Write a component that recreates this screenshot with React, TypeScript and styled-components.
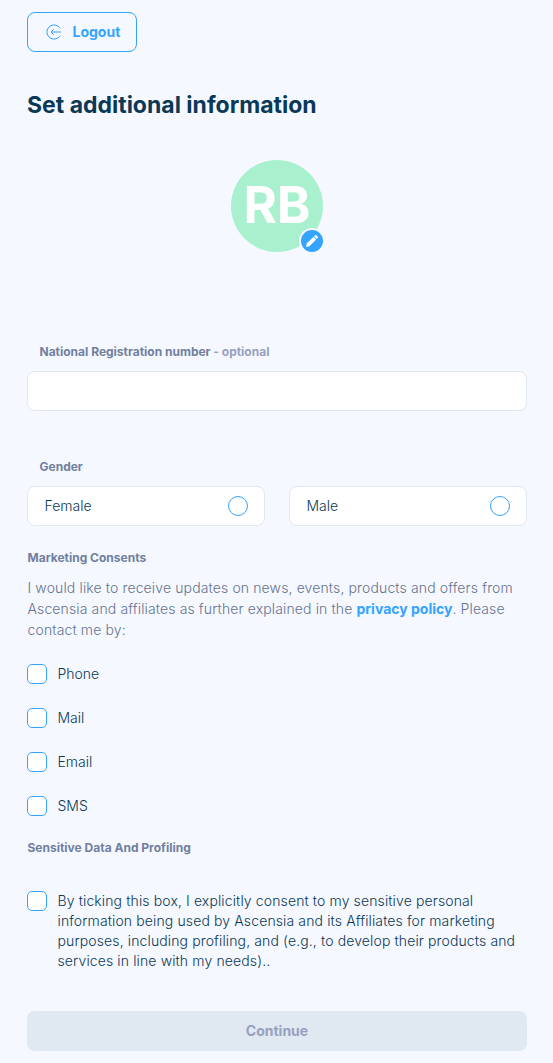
import React from 'react';
import styled, { createGlobalStyle } from 'styled-components';

const GlobalStyle = createGlobalStyle`
  *, *::before, *::after { box-sizing: border-box; }
  body {
    margin: 0;
    background: #f5f8ff;
    font-family: Inter, 'Liberation Sans', sans-serif;
    color: #0b3857;
  }
`;

const Page = styled.main`
  width: 553px;
  height: 1063px;
  padding: 12px 26px 0 27px;
  display: flex;
  flex-direction: column;
  align-items: stretch;
`;

const LogoutButton = styled.button`
  width: 110px;
  height: 40px;
  padding: 0 0 0 18px;
  display: flex;
  align-items: center;
  gap: 10.5px;
  border: 1px solid #34a4ff;
  border-radius: 8px;
  background: transparent;
  color: #34a4ff;
  font: 700 14px/20px Inter, sans-serif;
`;

const Title = styled.h1`
  margin: 37px 0 0;
  font-size: 23px;
  line-height: 32px;
  font-weight: 700;
`;

const Avatar = styled.div`
  position: relative;
  width: 92px;
  height: 92px;
  margin: 39px auto 0;
  padding-bottom: 3px;
  display: flex;
  align-items: center;
  justify-content: center;
  border-radius: 50%;
  background: #a9f0cf;
  color: #fff;
  font-size: 51px;
  line-height: 60px;
  font-weight: 700;
`;

const EditBadge = styled.button`
  position: absolute;
  right: -2px;
  bottom: -2px;
  width: 26px;
  height: 26px;
  padding: 0;
  display: flex;
  align-items: center;
  justify-content: center;
  border: 2px solid #f5f8ff;
  border-radius: 50%;
  background: #34a4ff;
`;

const Label = styled.div<{ $top: number; $indent?: boolean }>`
  margin-top: ${p => p.$top}px;
  padding-left: ${p => (p.$indent ? 12.5 : 0.5)}px;
  font-size: 12px;
  line-height: 20px;
  font-weight: 700;
  color: #707f9f;
`;

const Optional = styled.span`
  color: #989fc0;
`;

const TextInput = styled.input`
  width: 100%;
  height: 40px;
  margin-top: 9px;
  padding: 0 16px;
  border: 1px solid #e0e8f2;
  border-radius: 8px;
  background: #fff;
  outline: none;
`;

const Options = styled.div`
  display: grid;
  grid-template-columns: 1fr 1fr;
  gap: 24px;
  margin-top: 9px;
`;

const Option = styled.label`
  height: 40px;
  padding: 0 16px 0 16.5px;
  display: flex;
  align-items: center;
  justify-content: space-between;
  border: 1px solid #e0e8f2;
  border-radius: 8px;
  background: #fff;
  font-size: 14px;
  line-height: 20px;
  font-weight: 300;
`;

const Radio = styled.input.attrs({ type: 'radio' })`
  appearance: none;
  width: 20px;
  height: 20px;
  margin: 0;
  border: 1px solid #34a4ff;
  border-radius: 50%;
  background: #fff;
`;

const Description = styled.p`
  margin: 9px 0 1px;
  padding-left: 0.5px;
  font-size: 14px;
  line-height: 21px;
  font-weight: 300;
  letter-spacing: 0.13px;
  color: #65748f;
`;

const Link = styled.a`
  color: #34a4ff;
  font-weight: 700;
  letter-spacing: 0;
`;

const CheckList = styled.div`
  display: flex;
  flex-direction: column;
  gap: 24px;
  margin-top: 23px;
`;

const CheckRow = styled.label`
  display: flex;
  align-items: flex-start;
  gap: 10.5px;
  font-size: 14px;
  line-height: 20px;
  font-weight: 300;
`;

const Checkbox = styled.input.attrs({ type: 'checkbox' })`
  appearance: none;
  flex: none;
  width: 20px;
  height: 20px;
  margin: 0;
  border: 1px solid #34a4ff;
  border-radius: 5px;
  background: #fff;
`;

const Consent = styled.div`
  margin-top: 33px;
  letter-spacing: 0.125px;
`;

const ContinueButton = styled.button`
  height: 40px;
  margin-top: 40px;
  border: 0;
  border-radius: 8px;
  background: #e0e8f2;
  color: #989fc0;
  font: 700 14px/20px Inter, sans-serif;
`;

const LogoutIcon = () => (
  <svg width="16" height="16" viewBox="0 0 16 16" fill="none" stroke="currentColor" strokeWidth="1">
    <path d="M14 4.2A7.1 7.1 0 1 0 14 11.8" />
    <path d="M15 8H5M7.6 5.4L5 8l2.6 2.6" />
  </svg>
);

const PencilIcon = () => (
  <svg width="14" height="14" viewBox="0 0 14 14" fill="#fff">
    <path d="M1 13l.7-3.4L8.5 2.8l2.7 2.7-6.8 6.8z" />
    <path d="M9.1 2.2l.9-.9a1 1 0 0 1 1.4 0l1.3 1.3a1 1 0 0 1 0 1.4l-.9.9z" />
  </svg>
);

export default function App() {
  return (
    <>
      <GlobalStyle />
      <Page>
        <LogoutButton><LogoutIcon />Logout</LogoutButton>
        <Title>Set additional information</Title>
        <Avatar>
          RB
          <EditBadge aria-label="Edit picture"><PencilIcon /></EditBadge>
        </Avatar>
        <Label $top={90} $indent>National Registration number <Optional>- optional</Optional></Label>
        <TextInput />
        <Label $top={46} $indent>Gender</Label>
        <Options>
          {['Female', 'Male'].map(name => (
            <Option key={name}>{name}<Radio name="gender" /></Option>
          ))}
        </Options>
        <Label $top={22}>Marketing Consents</Label>
        <Description>
          I would like to receive updates on news, events, products and offers from Ascensia and
          affiliates as further explained in the <Link>privacy policy</Link>. Please contact me by:
        </Description>
        <CheckList>
          {['Phone', 'Mail', 'Email', 'SMS'].map(name => (
            <CheckRow key={name}><Checkbox />{name}</CheckRow>
          ))}
        </CheckList>
        <Label $top={22}>Sensitive Data And Profiling</Label>
        <Consent>
          <CheckRow>
            <Checkbox />
            <span>
              By ticking this box, I explicitly consent to my sensitive personal information being
              used by Ascensia and its Affiliates for marketing purposes, including profiling, and
              (e.g., to develop their products and services in line with my needs)..
            </span>
          </CheckRow>
        </Consent>
        <ContinueButton disabled>Continue</ContinueButton>
      </Page>
    </>
  );
}
